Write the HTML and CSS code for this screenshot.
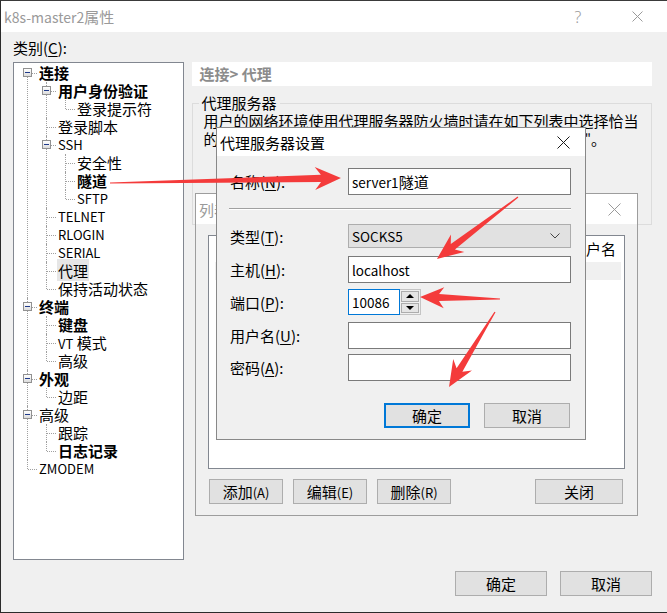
FILE: index.html
```html
<!DOCTYPE html>
<html lang="zh-CN">
<head>
    <meta charset="UTF-8">
    <title>k8s-master2属性</title>
    <link rel="stylesheet" href="styles.css">
</head>
<body>
<div class="window">
    <div class="titlebar">
        <span class="title"><span class="en">k8s-master2</span>属性</span>
        <div class="title-btns">
            <span class="help">?</span>
            <span class="close">
                <svg width="11" height="11" viewBox="0 0 11 11"><path d="M0.5 0.5 L10.5 10.5 M10.5 0.5 L0.5 10.5" stroke="#9a9a9a" stroke-width="1"/></svg>
            </span>
        </div>
    </div>

    <div class="content">
        <div class="cat-label">类别(<u>C</u>):</div>
        <div class="main">
            <ul class="tree">
                <li><span class="exp"></span><div class="row b">连接</div>
                    <ul>
                        <li><span class="exp"></span><div class="row b">用户身份验证</div>
                            <ul>
                                <li><div class="row">登录提示符</div></li>
                            </ul>
                        </li>
                        <li><div class="row">登录脚本</div></li>
                        <li><span class="exp"></span><div class="row en">SSH</div>
                            <ul>
                                <li><div class="row">安全性</div></li>
                                <li><div class="row b">隧道</div></li>
                                <li><div class="row en">SFTP</div></li>
                            </ul>
                        </li>
                        <li><div class="row en">TELNET</div></li>
                        <li><div class="row en">RLOGIN</div></li>
                        <li><div class="row en">SERIAL</div></li>
                        <li><div class="row"><span class="sel">代理</span></div></li>
                        <li><div class="row">保持活动状态</div></li>
                    </ul>
                </li>
                <li><span class="exp"></span><div class="row b">终端</div>
                    <ul>
                        <li><div class="row b">键盘</div></li>
                        <li><div class="row"><span class="en">VT</span> 模式</div></li>
                        <li><div class="row">高级</div></li>
                    </ul>
                </li>
                <li><span class="exp"></span><div class="row b">外观</div>
                    <ul>
                        <li><div class="row">边距</div></li>
                    </ul>
                </li>
                <li><span class="exp"></span><div class="row">高级</div>
                    <ul>
                        <li><div class="row">跟踪</div></li>
                        <li><div class="row b">日志记录</div></li>
                    </ul>
                </li>
                <li><div class="row en">ZMODEM</div></li>
            </ul>

            <div class="panel">
                <div class="crumb">连接&gt; 代理</div>
                <fieldset class="group">
                    <legend>代理服务器</legend>
                    <p>用户的网络环境使用代理服务器防火墙时请在如下列表中选择恰当<br>的代理服务器。如果需要添加新代理服务器，请单击<span class="en">"</span>浏览<span class="en">"</span>。</p>
                </fieldset>
            </div>
        </div>
        <div class="footer">
            <button class="btn">确定</button>
            <button class="btn">取消</button>
        </div>
    </div>

    <!-- proxy list dialog -->
    <div class="dlg dlg-list">
        <div class="dlg-title">
            <span class="dlg-name inactive">列表</span>
            <span class="dlg-x">
                <svg width="13" height="13" viewBox="0 0 13 13"><path d="M0.5 0.5 L12.5 12.5 M12.5 0.5 L0.5 12.5" stroke="#9a9a9a" stroke-width="1"/></svg>
            </span>
        </div>
        <div class="dlg-body">
            <div class="listview">
                <div class="lv-head">
                    <span class="col-name">名称</span>
                    <span class="col-type">类型</span>
                    <span class="col-host">主机</span>
                    <span class="col-port">端口</span>
                    <span>用户名</span>
                </div>
                <div class="lv-row"></div>
            </div>
            <div class="lv-btns">
                <button class="btn">添加<span class="en">(A)</span></button>
                <button class="btn">编辑<span class="en">(E)</span></button>
                <button class="btn">删除<span class="en">(R)</span></button>
                <button class="btn wide">关闭</button>
            </div>
        </div>
    </div>

    <!-- proxy settings dialog -->
    <div class="dlg dlg-proxy">
        <div class="dlg-title">
            <span class="dlg-name">代理服务器设置</span>
            <span class="dlg-x">
                <svg width="13" height="13" viewBox="0 0 13 13"><path d="M0.5 0.5 L12.5 12.5 M12.5 0.5 L0.5 12.5" stroke="#1a1a1a" stroke-width="1"/></svg>
            </span>
        </div>
        <div class="dlg-body form">
            <div class="frow r-name">
                <label>名称(<u>N</u>):</label>
                <div class="field"><span class="en">server1</span>隧道</div>
            </div>
            <div class="sep"></div>
            <div class="frow r-type">
                <label>类型(<u>T</u>):</label>
                <div class="select">
                    <span class="en">SOCKS5</span>
                    <svg width="10" height="6" viewBox="0 0 10 6"><polyline points="0.5,0.5 5,5 9.5,0.5" fill="none" stroke="#444" stroke-width="1"/></svg>
                </div>
            </div>
            <div class="frow r-host">
                <label>主机(<u>H</u>):</label>
                <div class="field"><span class="en">localhost</span></div>
            </div>
            <div class="frow r-port">
                <label>端口(<u>P</u>):</label>
                <div class="port">
                    <div class="field focus"><span class="en">10086</span></div>
                    <div class="spin"><span class="up"></span><span class="down"></span></div>
                </div>
            </div>
            <div class="frow r-user">
                <label>用户名(<u>U</u>):</label>
                <div class="field"></div>
            </div>
            <div class="frow r-pass">
                <label>密码(<u>A</u>):</label>
                <div class="field"></div>
            </div>
            <div class="form-btns">
                <button class="btn default">确定</button>
                <button class="btn">取消</button>
            </div>
        </div>
    </div>

    <!-- annotation arrows -->
    <svg class="arrows" width="667" height="613" viewBox="0 0 667 613">
        <g fill="#f43b3b">
            <polygon transform="translate(110,183) rotate(-1.24)" points="0,-0.6 211,-3.6 205,-11.5 231,0 205,11.5 211,3.6 0,0.6"/>
            <polygon transform="translate(518,197) rotate(142.6)" points="0,-0.6 82,-3.4 76,-11 102,0 76,11 82,3.4 0,0.6"/>
            <polygon transform="translate(500,299) rotate(-178.6)" points="0,-0.6 61,-3.4 56,-10.5 80,0 56,10.5 61,3.4 0,0.6"/>
            <polygon transform="translate(495,312) rotate(121.5)" points="0,-0.6 68,-3.4 62,-11 88,0 62,11 68,3.4 0,0.6"/>
        </g>
    </svg>
</div>
</body>
</html>
```

FILE: styles.css
```css
* {
    box-sizing: border-box;
}

body {
    margin: 0;
    background: #f0f0f0;
    color: #000;
    font-family: "Noto Sans CJK SC", "Noto Sans", sans-serif;
    font-size: 15px;
}

.en {
    font-size: 13px;
}

u {
    text-decoration-thickness: 1px;
    text-underline-offset: 2px;
}

.window {
    position: relative;
    width: 667px;
    height: 613px;
    background: #f0f0f0;
    border-top: 1px solid #3a3a3a;
    border-left: 1px solid #2b2b2b;
    border-bottom: 1px solid #2b2b2b;
    overflow: hidden;
}

/* title bar */
.titlebar {
    height: 31px;
    background: #fff;
    display: flex;
    align-items: center;
    padding-left: 3px;
}

.title {
    color: #9a9a9a;
}

.title .en {
    font-size: 14px;
}

.title-btns {
    margin-left: auto;
    display: flex;
    align-items: center;
    padding-right: 16px;
}

.help {
    width: 30px;
    text-align: center;
    color: #9a9a9a;
    font-family: "Noto Sans", sans-serif;
    font-size: 16px;
    font-weight: 300;
}

.close {
    width: 28px;
    margin-left: 30px;
    display: flex;
    justify-content: center;
}

/* main content */
.content {
    padding: 7px 15px 0 12px;
}

.cat-label {
    height: 18px;
    line-height: 18px;
}

.main {
    display: flex;
    gap: 8px;
    margin-top: 5px;
}

.tree,
.tree ul {
    list-style: none;
    margin: 0;
    padding: 0;
}

.tree {
    width: 171px;
    height: 498px;
    background: #fff;
    border: 1px solid #828790;
    padding: 1px 0 0 13px;
    overflow: hidden;
}

.tree ul {
    margin-left: 7px;
}

.tree li {
    position: relative;
    padding-left: 12px;
}

.tree li::before {
    content: '';
    position: absolute;
    left: 0;
    top: 0;
    bottom: 0;
    border-left: 1px dotted #a0a0a0;
}

.tree li:last-child::before {
    bottom: auto;
    height: 9px;
}

.tree > li:first-child::before {
    top: 9px;
}

.tree li::after {
    content: '';
    position: absolute;
    left: 1px;
    top: 9px;
    width: 9px;
    border-top: 1px dotted #a0a0a0;
}

.exp {
    position: absolute;
    left: -4px;
    top: 4px;
    width: 9px;
    height: 9px;
    border: 1px solid #919191;
    background: linear-gradient(#fff, #dcdcdc);
    z-index: 1;
}

.exp::before {
    content: '';
    position: absolute;
    left: 1px;
    top: 3px;
    width: 5px;
    height: 1px;
    background: #1f3a8a;
}

.row {
    height: 18px;
    line-height: 18px;
    white-space: nowrap;
}

.row.b {
    font-weight: bold;
}

.row.en {
    font-size: 13px;
}

.sel {
    background: #e6e6e6;
    padding: 1px 1px 0;
    margin-left: -1px;
}

/* right panel */
.panel {
    width: 462px;
    display: flex;
    flex-direction: column;
}

.crumb {
    height: 24px;
    line-height: 24px;
    background: #fff;
    padding-left: 8px;
    color: #8c8c8c;
    font-weight: bold;
}

.group {
    margin: 8px 0 0;
    height: 131px;
    border: 1px solid #dcdcdc;
    padding: 0 11px;
}

.group legend {
    padding: 0 3px;
    margin-left: -5px;
    line-height: 18px;
}

.group p {
    margin: 0;
    line-height: 18px;
    white-space: nowrap;
}

.footer {
    display: flex;
    justify-content: flex-end;
    gap: 13px;
    margin-top: 11px;
}

.footer .btn {
    width: 92px;
}

.btn {
    height: 25px;
    padding: 0;
    background: #e1e1e1;
    border: 1px solid #adadad;
    color: #000;
    font-family: inherit;
    font-size: 15px;
    line-height: 21px;
    text-align: center;
}

.btn.default {
    border: 2px solid #0078d7;
}

/* dialogs */
.dlg {
    position: absolute;
    background: #f0f0f0;
}

.dlg-title {
    background: #fff;
    display: flex;
    align-items: center;
    padding-left: 3px;
}

.dlg-x {
    margin-left: auto;
    display: flex;
}

.inactive {
    color: #9a9a9a;
}

.dlg-list {
    left: 194px;
    top: 192px;
    width: 443px;
    height: 323px;
    border: 1px solid #9d9d9d;
}

.dlg-list .dlg-title {
    height: 30px;
}

.dlg-list .dlg-x {
    margin-right: 16px;
}

.dlg-list .dlg-body {
    padding: 11px 12px 0;
}

.listview {
    width: 417px;
    height: 234px;
    background: #fff;
    border: 1px solid #828790;
}

.lv-head {
    display: flex;
    height: 25px;
    line-height: 25px;
    padding-left: 10px;
    white-space: nowrap;
}

.col-name {
    width: 112px;
}

.col-type {
    width: 80px;
}

.col-host {
    width: 100px;
}

.col-port {
    width: 60px;
}

.lv-row {
    height: 18px;
    margin: 1px 3px 0 6px;
    background: #f0f0f0;
}

.lv-btns {
    display: flex;
    gap: 10px;
    margin-top: 10px;
    padding-left: 1px;
    padding-right: 2px;
}

.lv-btns .btn {
    width: 74px;
}

.lv-btns .btn.wide {
    width: 88px;
    margin-left: auto;
}

.dlg-proxy {
    left: 215px;
    top: 126px;
    width: 370px;
    height: 313px;
    border: 1px solid #888;
    z-index: 2;
}

.dlg-proxy .dlg-title {
    height: 28px;
}

.dlg-proxy .dlg-x {
    margin-right: 15px;
}

.form {
    padding: 12px 14px 0 13px;
}

.frow {
    display: grid;
    grid-template-columns: 118px 223px;
    align-items: center;
}

.field {
    height: 27px;
    background: #fff;
    border: 1px solid #7a7a7a;
    padding-left: 3px;
    display: flex;
    align-items: center;
    white-space: nowrap;
}

.field .en {
    font-size: 13.5px;
}

.sep {
    margin: 13px 0 0 -1px;
    height: 2px;
    border-top: 1px solid #a0a0a0;
    border-bottom: 1px solid #fff;
}

.r-type {
    margin-top: 14px;
}

.select {
    height: 24px;
    background: #e1e1e1;
    border: 1px solid #adadad;
    display: flex;
    align-items: center;
    justify-content: space-between;
    padding: 0 10px 0 3px;
}

.select .en {
    font-size: 13.5px;
}

.r-host {
    margin-top: 8px;
}

.r-port {
    margin-top: 6px;
}

.port {
    display: flex;
}

.port .field {
    width: 52px;
    height: 26px;
}

.field.focus {
    border-color: #0078d7;
}

.spin {
    width: 21px;
    height: 26px;
    border: 1px solid #c4c4c4;
    border-left: 0;
    padding: 1px;
    display: flex;
    flex-direction: column;
    gap: 1px;
}

.spin span {
    flex: 1;
    background: #e5e5e5;
    border: 1px solid #adadad;
    display: flex;
    align-items: center;
    justify-content: center;
}

.spin .up::before,
.spin .down::before {
    content: '';
    border-left: 4px solid transparent;
    border-right: 4px solid transparent;
}

.spin .up::before {
    border-bottom: 4px solid #000;
}

.spin .down::before {
    border-top: 4px solid #000;
}

.r-user {
    margin-top: 7px;
}

.r-pass {
    margin-top: 5px;
}

.form-btns {
    display: flex;
    justify-content: flex-end;
    gap: 14px;
    margin-top: 22px;
    padding-right: 1px;
}

.form-btns .btn {
    width: 86px;
}

.arrows {
    position: absolute;
    left: -1px;
    top: -1px;
    z-index: 5;
    pointer-events: none;
}
```
